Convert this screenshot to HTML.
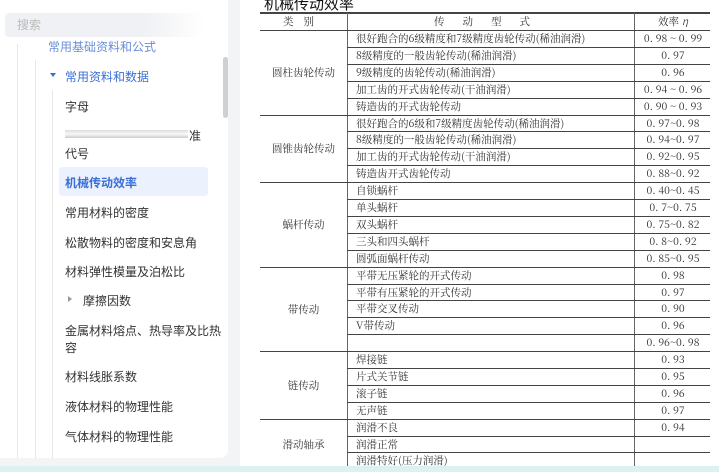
<!DOCTYPE html>
<html><head><meta charset="utf-8"><style>
*{margin:0;padding:0;box-sizing:border-box}
html,body{width:719px;height:472px;overflow:hidden}
body{background:#f3f4f6;font-family:"Liberation Sans","Noto Sans CJK SC",sans-serif;position:relative}
.side{position:absolute;left:0;top:0;width:228px;height:458px;background:#fff;border-radius:0 0 8px 0;overflow:hidden}
.search{position:absolute;left:5px;top:13px;width:200px;height:24px;background:linear-gradient(90deg,#f0f1f4 70%,#fff);border-radius:4px;color:#bbb;font-size:12px;line-height:24px;padding-left:12px}
.it{position:absolute;font-size:12px;color:#333;left:65px;white-space:nowrap}
.vl{position:absolute;width:1px;background:#e8e8e8;top:44px;bottom:0}
.sb{position:absolute;left:223px;top:57px;width:5px;height:61px;background:#d0d0d0;border-radius:3px}
.main{position:absolute;left:240px;top:0;width:479px;height:466px;background:#fff;overflow:hidden}
.t{position:absolute;font-family:"Noto Serif CJK SC","Liberation Serif",serif;font-size:10.5px;line-height:17px;height:17px;color:#333;white-space:nowrap}
.h{position:absolute;height:1px;background:#444}
.band{position:absolute;left:0;top:466px;width:719px;height:6px;background:#ddf1f3}
</style></head><body>
<div class="side">
<div class="search">搜索</div>
<div class="vl" style="left:17px"></div><div class="vl" style="left:35px;top:60px"></div><div class="vl" style="left:52px;top:90px"></div>
<div class="it" style="left:48px;top:38px;color:#6a8fd8">常用基础资料和公式</div>
<div style="position:absolute;left:50px;top:73px;border:3.5px solid transparent;border-top:4px solid #3a6fd8"></div>
<div class="it" style="left:65px;top:68px;color:#3a6fd8">常用资料和数据</div>
<div class="it" style="top:98px">字母</div>
<div style="position:absolute;left:65px;top:130px;width:123px;height:8px;background:linear-gradient(#ddd,#f8f8f8,#ccc)"></div>
<div class="it" style="left:189px;top:127px">准</div>
<div class="it" style="top:145px">代号</div>
<div style="position:absolute;left:59px;top:167px;width:149px;height:29px;background:#ebf1fd;border-radius:3px"></div>
<div class="it" style="top:174px;color:#3a6fd8;font-weight:bold">机械传动效率</div>
<div class="it" style="top:204px">常用材料的密度</div>
<div class="it" style="top:234px">松散物料的密度和安息角</div>
<div class="it" style="top:263px">材料弹性模量及泊松比</div>
<div style="position:absolute;left:68px;top:296px;border:3px solid transparent;border-left:4px solid #999"></div>
<div class="it" style="left:83px;top:292px">摩擦因数</div>
<div class="it" style="top:322px">金属材料熔点、热导率及比热</div>
<div class="it" style="top:339px">容</div>
<div class="it" style="top:368px">材料线胀系数</div>
<div class="it" style="top:398px">液体材料的物理性能</div>
<div class="it" style="top:428px">气体材料的物理性能</div>
<div class="sb"></div>
</div>
<div class="main">
<div style="position:absolute;left:24px;top:-7px;font-size:15px;color:#111;font-family:'Liberation Sans','Noto Sans CJK SC',sans-serif">机械传动效率</div>
<div class="h" style="left:20px;width:450px;top:12px;height:2px"></div>
<div style="position:absolute;left:107px;top:13px;width:1px;height:455px;background:#666"></div>
<div style="position:absolute;left:394px;top:13px;width:1px;height:455px;background:#666"></div>
</div>
<div class="band"></div>
<script>
var m=document.querySelector('.main');
function t(x,y,s,c){var d=document.createElement('div');d.className='t';d.style.left=x+'px';d.style.top=y+'px';if(c){d.style.width='76px';d.style.textAlign='center'}d.textContent=s;m.appendChild(d)}
var hd=document.createElement('div');hd.className='t';hd.style.cssText='left:20px;top:13px;width:87px;text-align:center;letter-spacing:10px';hd.textContent='类别';m.appendChild(hd);
hd=document.createElement('div');hd.className='t';hd.style.cssText='left:108px;top:13px;width:286px;text-align:center;letter-spacing:18px';hd.textContent='传动型式';m.appendChild(hd);
hd=document.createElement('div');hd.className='t';hd.style.cssText='left:395px;top:13px;width:76px;text-align:center';hd.innerHTML='效率 <i>η</i>';m.appendChild(hd);
var g=[['圆柱齿轮传动',[['很好跑合的6级精度和7级精度齿轮传动(稀油润滑)','0. 98 ~ 0. 99'],['8级精度的一般齿轮传动(稀油润滑)','0. 97'],['9级精度的齿轮传动(稀油润滑)','0. 96'],['加工齿的开式齿轮传动(干油润滑)','0. 94 ~ 0. 96'],['铸造齿的开式齿轮传动','0. 90 ~ 0. 93']]],
['圆锥齿轮传动',[['很好跑合的6级和7级精度齿轮传动(稀油润滑)','0. 97~0. 98'],['8级精度的一般齿轮传动(稀油润滑)','0. 94~0. 97'],['加工齿的开式齿轮传动(干油润滑)','0. 92~0. 95'],['铸造齿开式齿轮传动','0. 88~0. 92']]],
['蜗杆传动',[['自锁蜗杆','0. 40~0. 45'],['单头蜗杆','0. 7~0. 75'],['双头蜗杆','0. 75~0. 82'],['三头和四头蜗杆','0. 8~0. 92'],['圆弧面蜗杆传动','0. 85~0. 95']]],
['带传动',[['平带无压紧轮的开式传动','0. 98'],['平带有压紧轮的开式传动','0. 97'],['平带交叉传动','0. 90'],['V带传动','0. 96'],['','0. 96~0. 98']]],
['链传动',[['焊接链','0. 93'],['片式关节链','0. 95'],['滚子链','0. 96'],['无声链','0. 97']]],
['滑动轴承',[['润滑不良','0. 94'],['润滑正常',''],['润滑特好(压力润滑)','']]]];
var y=30,rh=16.9;
g.forEach(function(gr){var y0=y;var L=document.createElement('div');L.className='h';L.style.cssText='left:20px;width:450px;top:'+Math.round(y)+'px';m.appendChild(L);
gr[1].forEach(function(r,i){if(i>0){var l=document.createElement('div');l.className='h';l.style.cssText='left:107px;width:363px;top:'+Math.round(y)+'px';m.appendChild(l)}
t(116,Math.round(y),r[0]);t(395,Math.round(y),r[1],1);y+=rh});
var c=document.createElement('div');c.className='t';c.style.cssText='left:20px;width:87px;text-align:center;top:'+Math.round((y0+y)/2-8)+'px';c.textContent=gr[0];m.appendChild(c)});
</script>
</body></html>
